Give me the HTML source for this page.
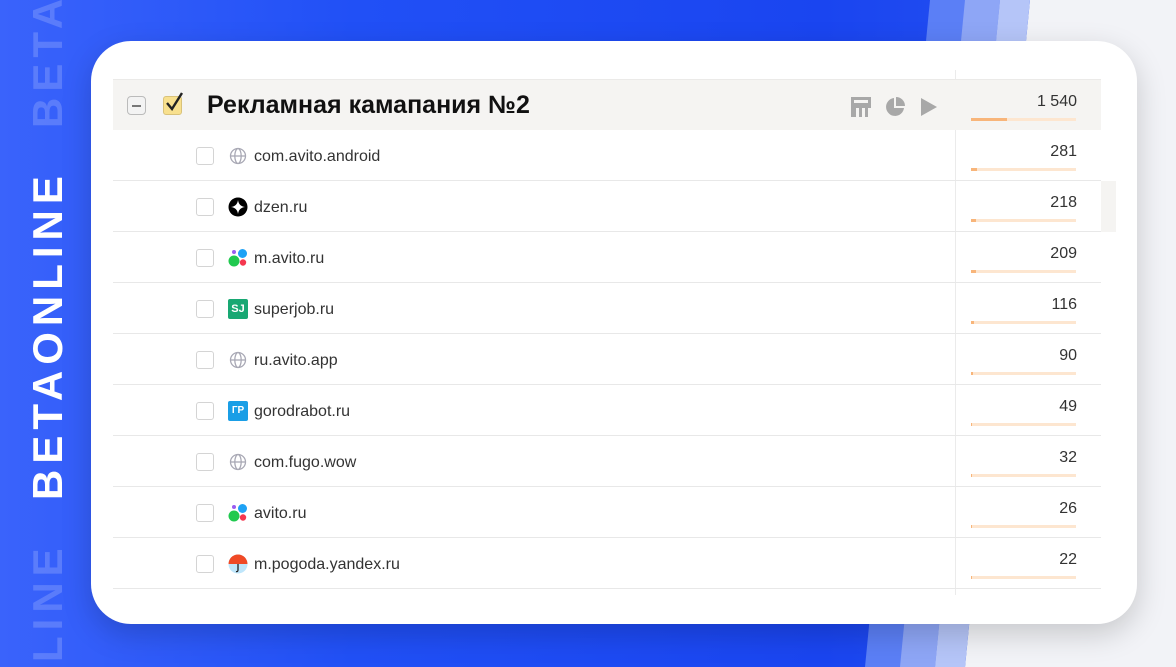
<!DOCTYPE html>
<html><head><meta charset="utf-8"><style>
*{margin:0;padding:0;box-sizing:border-box}
html,body{width:1176px;height:667px;overflow:hidden}
body{font-family:"Liberation Sans",sans-serif;background:#f2f3f7}
.wrap{position:absolute;left:0;top:0;width:1176px;height:667px;overflow:hidden}
.bg{position:absolute;inset:0;background:linear-gradient(90deg,#3a63fb 0%,#2150f6 30%,#1a45f0 70%,#2a55f2 100%);clip-path:polygon(0 0,1030px 0,965px 667px,0 667px)}
.s1{position:absolute;inset:0;background:#5b7ff6;clip-path:polygon(930px 0,1000px 0,935px 667px,865px 667px)}
.s2{position:absolute;inset:0;background:#8ea6f6;clip-path:polygon(965px 0,1000px 0,935px 667px,900px 667px)}
.s3{position:absolute;inset:0;background:#b5c5f8;clip-path:polygon(1000px 0,1030px 0,965px 667px,935px 667px)}
.vt{position:absolute;font-weight:bold;font-size:42px;line-height:29px;letter-spacing:6px;white-space:nowrap;transform-origin:0 0;transform:rotate(-90deg);color:#fff}
.card{position:absolute;left:91px;top:41px;width:1046px;height:583px;background:#fff;border-radius:40px;box-shadow:0 10px 30px rgba(0,0,0,.18)}
.hdr{position:absolute;left:113px;top:79px;width:988px;height:51px;background:#f5f4f2;border-top:1px solid #ebeae8}
.vl{position:absolute;left:955px;top:70px;width:1px;height:525px;background:#ebebeb}
.row{position:absolute;left:113px;width:988px;height:51px;border-bottom:1px solid #e8e8e8}
.cb{position:absolute;left:83px;top:17px;width:18px;height:18px;border:1px solid #d4d4d4;border-radius:3px;background:#fff}
.ic{position:absolute;left:115px;top:16px;width:20px;height:20px}
.nm{position:absolute;left:141px;top:17px;font-size:16px;color:#333;line-height:20px}
.num{position:absolute;right:24px;font-size:16px;color:#333;line-height:20px;top:12px}
.bar{position:absolute;left:858px;width:105px;height:3px;background:#fde6d0;top:38px}
.bar i{position:absolute;left:0;top:0;height:3px;background:#f8b57a}
</style></head><body><div class="wrap">
<div class="bg"></div><div class="s1"></div><div class="s2"></div><div class="s3"></div>
<div class="vt" style="left:33px;top:500px">BETAONLINE</div>
<div class="vt" style="left:33px;top:128px;color:rgba(255,255,255,.18)">BETA</div>
<div class="vt" style="left:33px;top:662px;color:rgba(255,255,255,.18)">LINE</div>
<div class="card"></div>
<div class="vl"></div>
<div class="hdr">
 <div style="position:absolute;left:14px;top:16px;width:19px;height:19px;border:1px solid #bbb;border-radius:4px;background:#f3f3f3"><div style="position:absolute;left:4px;top:8px;width:9px;height:1.5px;background:#777"></div></div>
 <div style="position:absolute;left:50px;top:16px;width:19px;height:19px;border-radius:3px;background:#f8e08e;border:1px solid #d9c27a"></div>
 <svg style="position:absolute;left:50px;top:10px" width="24" height="24" viewBox="0 0 24 24"><path d="M4 13 L9 19 L19 3" fill="none" stroke="#222" stroke-width="2.4"/></svg>
 <div style="position:absolute;left:94px;top:10px;font-size:25px;font-weight:bold;color:#111;line-height:30px">Рекламная камапания №2</div>
 <svg style="position:absolute;left:738px;top:17px" width="20" height="20" viewBox="0 0 20 20" fill="#a8a8a8"><path d="M0 0h20v11h-3v9h-3v-9h-3v9h-3v-9H5v9H0zM3 3v3h14V3z"/></svg>
 <svg style="position:absolute;left:772px;top:17px" width="20" height="20" viewBox="0 0 20 20" fill="#a8a8a8"><path d="M9 1A9 9 0 1 0 19 11H9z"/><path d="M11 0a9 9 0 0 1 9 9h-9z"/></svg>
 <svg style="position:absolute;left:807px;top:17px" width="18" height="20" viewBox="0 0 18 20" fill="#a8a8a8"><path d="M1 1L17 10L1 19z"/></svg>
 <div class="num" style="top:12px;right:24px">1 540</div>
 <div class="bar" style="top:38px"><i style="width:36px"></i></div>
</div>

<div class="row" style="top:130px"><div class="cb"></div>
<svg class="ic" viewBox="0 0 20 20" fill="none" stroke="#a9a9b5" stroke-width="1.3"><circle cx="10" cy="10" r="7.5"/><ellipse cx="10" cy="10" rx="3.2" ry="7.5"/><path d="M2.5 10h15"/></svg>
<div class="nm">com.avito.android</div><div class="num">281</div><div class="bar"><i style="width:6px"></i></div></div>

<div class="row" style="top:181px"><div class="cb"></div>
<svg class="ic" viewBox="0 0 20 20"><circle cx="10" cy="10" r="9.5" fill="#000"/><path d="M10 3Q10.8 9.2 17 10Q10.8 10.8 10 17Q9.2 10.8 3 10Q9.2 9.2 10 3z" fill="#fff"/></svg>
<div class="nm">dzen.ru</div><div class="num">218</div><div class="bar"><i style="width:5px"></i></div></div>

<div class="row" style="top:232px"><div class="cb"></div>
<svg class="ic" viewBox="0 0 20 20"><circle cx="6" cy="13" r="5.5" fill="#20c94f"/><circle cx="14.5" cy="5.5" r="4.5" fill="#1ea2f5"/><circle cx="15" cy="14.5" r="3.2" fill="#f5374f"/><circle cx="6" cy="4" r="2" fill="#9a5cf0"/></svg>
<div class="nm">m.avito.ru</div><div class="num">209</div><div class="bar"><i style="width:5px"></i></div></div>

<div class="row" style="top:283px"><div class="cb"></div>
<div class="ic" style="background:#18a873;border-radius:2px;color:#fff;font-size:11px;font-weight:bold;text-align:center;line-height:20px">SJ</div>
<div class="nm">superjob.ru</div><div class="num">116</div><div class="bar"><i style="width:3px"></i></div></div>

<div class="row" style="top:334px"><div class="cb"></div>
<svg class="ic" viewBox="0 0 20 20" fill="none" stroke="#a9a9b5" stroke-width="1.3"><circle cx="10" cy="10" r="7.5"/><ellipse cx="10" cy="10" rx="3.2" ry="7.5"/><path d="M2.5 10h15"/></svg>
<div class="nm">ru.avito.app</div><div class="num">90</div><div class="bar"><i style="width:2px"></i></div></div>

<div class="row" style="top:385px"><div class="cb"></div>
<div class="ic" style="background:#1a9ee6;border-radius:2px;color:#fff;font-size:10px;font-weight:bold;text-align:center;line-height:20px">ГР</div>
<div class="nm">gorodrabot.ru</div><div class="num">49</div><div class="bar"><i style="width:1px"></i></div></div>

<div class="row" style="top:436px"><div class="cb"></div>
<svg class="ic" viewBox="0 0 20 20" fill="none" stroke="#a9a9b5" stroke-width="1.3"><circle cx="10" cy="10" r="7.5"/><ellipse cx="10" cy="10" rx="3.2" ry="7.5"/><path d="M2.5 10h15"/></svg>
<div class="nm">com.fugo.wow</div><div class="num">32</div><div class="bar"><i style="width:1px"></i></div></div>

<div class="row" style="top:487px"><div class="cb"></div>
<svg class="ic" viewBox="0 0 20 20"><circle cx="6" cy="13" r="5.5" fill="#20c94f"/><circle cx="14.5" cy="5.5" r="4.5" fill="#1ea2f5"/><circle cx="15" cy="14.5" r="3.2" fill="#f5374f"/><circle cx="6" cy="4" r="2" fill="#9a5cf0"/></svg>
<div class="nm">avito.ru</div><div class="num">26</div><div class="bar"><i style="width:1px"></i></div></div>

<div class="row" style="top:538px"><div class="cb"></div>
<svg class="ic" viewBox="0 0 20 20"><circle cx="10" cy="10" r="9.5" fill="#bfe6fb"/><path d="M0.5 10A9.5 9.5 0 0 1 19.5 10z" fill="#f04a26"/><path d="M10 10v6q0 2-2 1.5" fill="none" stroke="#222" stroke-width="1.3"/></svg>
<div class="nm">m.pogoda.yandex.ru</div><div class="num">22</div><div class="bar"><i style="width:1px"></i></div></div>

<div style="position:absolute;left:1101px;top:181px;width:15px;height:51px;background:#f5f4f2"></div>
</div></body></html>
